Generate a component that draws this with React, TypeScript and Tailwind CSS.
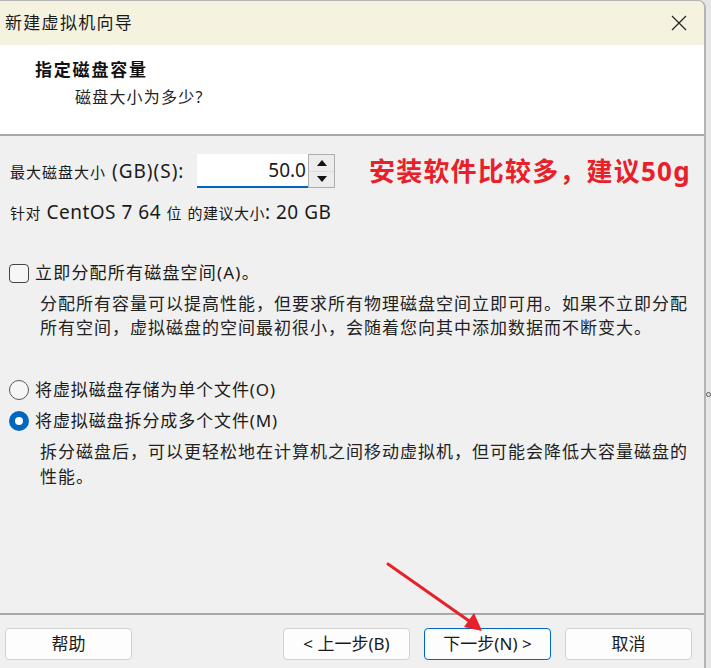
import React from 'react';

const FONT = "font-['Noto_Sans','Noto_Sans_CJK_SC',sans-serif]";

const WizardButton = ({ label, primary }: { label: string; primary?: boolean }) => (
  <button
    className={`w-[127px] h-[32px] rounded-[4px] bg-[#fdfdfd] text-[17px] text-[#1a1a1a] border ${
      primary ? 'border-[#0067c0]' : 'border-[#d0d0d0]'
    }`}
  >
    {label}
  </button>
);

const Radio = ({ checked }: { checked?: boolean }) =>
  checked ? (
    <span className="w-[20px] h-[20px] rounded-full bg-[#0067c0] flex items-center justify-center shrink-0">
      <span className="w-[8px] h-[8px] rounded-full bg-white" />
    </span>
  ) : (
    <span className="w-[20px] h-[20px] rounded-full border border-[#5a5a5a] bg-[#f6f6f6] shrink-0" />
  );

// CJK part of the mixed labels renders smaller than the latin part
const Cjk = ({ children }: { children: React.ReactNode }) => <span className="text-[15px]">{children}</span>;

const App = () => {
  return (
    <div className={`w-[711px] h-[668px] bg-[#e6e6e6] flex relative ${FONT}`}>
      <div className="w-[706px] h-full flex flex-col border-r-2 border-t border-[#b4b4b4] rounded-tr-[8px] overflow-hidden">
        {/* title bar */}
        <div className="h-[44px] bg-[#f5f2e0] flex items-center justify-between pl-[5px] pr-[16px] shrink-0">
          <span className="text-[17px] tracking-[1.3px] text-[#1a1a1a]">新建虚拟机向导</span>
          <svg width="16" height="16" viewBox="0 0 16 16" className="mr-[1px]">
            <path d="M1 1 L15 15 M15 1 L1 15" stroke="#222" strokeWidth="1.2" fill="none" />
          </svg>
        </div>

        {/* header */}
        <div className="h-[91px] bg-white border-b-2 border-[#a8a8a8] pl-[35px] pt-[12px] shrink-0">
          <div className="text-[17px] font-bold tracking-[1.8px] leading-[26px] text-[#111]">指定磁盘容量</div>
          <div className="pl-[40px] text-[16px] tracking-[1.2px] leading-[26px] mt-[1px] text-[#222]">磁盘大小为多少?</div>
        </div>

        {/* body */}
        <div className="flex-1 bg-[#f0f0f0] text-[#1a1a1a] flex flex-col">
          <div className="flex items-center h-[34px] mt-[18px] pl-[10px]">
            <span className="text-[19px] tracking-[1px] w-[187px] whitespace-nowrap">
              <Cjk>最大磁盘大小</Cjk> (GB)(S):
            </span>
            <div className="w-[111px] h-[34px] bg-white border-b-2 border-[#0067c0] flex items-center justify-end pr-[2px] text-[19px]">
              50.0
            </div>
            <div className="flex flex-col w-[27px] h-[34px] border border-[#adadad] bg-[#dcdcdc] gap-[1px]">
              <div className="flex-1 bg-[#ececec] flex items-center justify-center">
                <svg width="10" height="6" viewBox="0 0 10 6"><path d="M0 6 L5 0 L10 6 Z" fill="#111" /></svg>
              </div>
              <div className="flex-1 bg-[#ececec] flex items-center justify-center">
                <svg width="10" height="6" viewBox="0 0 10 6"><path d="M0 0 L5 6 L10 0 Z" fill="#111" /></svg>
              </div>
            </div>
            <span className="ml-[34px] text-[26px] font-bold text-[#e8202a] whitespace-nowrap tracking-[1.2px]">
              安装软件比较多，建议50g
            </span>
          </div>

          <div className="mt-[14px] pl-[10px] text-[19px] tracking-[0.5px] leading-[20px] whitespace-nowrap">
            <Cjk>针对</Cjk> CentOS 7 64 <Cjk>位</Cjk> <Cjk>的建议大小</Cjk>: 20 GB
          </div>

          <div className="mt-[40px] pl-[9px] flex items-center gap-[6px] h-[20px]">
            <span className="w-[20px] h-[19px] rounded-[4px] border border-[#444] bg-[#f6f6f6] shrink-0" />
            <span className="text-[17px] tracking-[1.2px] whitespace-nowrap">立即分配所有磁盘空间(A)。</span>
          </div>
          <p className="mt-[9px] pl-[40px] text-[17px] tracking-[1px] leading-[24px] whitespace-nowrap text-[#222]">
            分配所有容量可以提高性能，但要求所有物理磁盘空间立即可用。如果不立即分配
            <br />
            所有空间，虚拟磁盘的空间最初很小，会随着您向其中添加数据而不断变大。
          </p>

          <div className="mt-[40px] pl-[9px] flex items-center gap-[6px] h-[20px]">
            <Radio />
            <span className="text-[17px] tracking-[0.9px] whitespace-nowrap">将虚拟磁盘存储为单个文件(O)</span>
          </div>
          <div className="mt-[11px] pl-[9px] flex items-center gap-[6px] h-[20px]">
            <Radio checked />
            <span className="text-[17px] tracking-[0.9px] whitespace-nowrap">将虚拟磁盘拆分成多个文件(M)</span>
          </div>
          <p className="mt-[8px] pl-[40px] text-[17px] tracking-[1px] leading-[25px] whitespace-nowrap text-[#222]">
            拆分磁盘后，可以更轻松地在计算机之间移动虚拟机，但可能会降低大容量磁盘的
            <br />
            性能。
          </p>
        </div>

        {/* footer */}
        <div className="h-[55px] bg-[#f0f0f0] border-t-2 border-[#a8a8a8] flex items-start pt-[13px] pl-[5px] pr-[12px] shrink-0">
          <WizardButton label="帮助" />
          <div className="ml-auto flex gap-[14px]">
            <WizardButton label="< 上一步(B)" />
            <WizardButton label="下一步(N) >" primary />
            <WizardButton label="取消" />
          </div>
        </div>
      </div>

      {/* small resize marker on the window edge */}
      <span className="absolute left-[706px] top-[392px] w-[5px] h-[5px] rounded-full border border-[#555]" />

      {/* annotation arrow */}
      <svg className="absolute left-0 top-0 pointer-events-none" width="711" height="668">
        <line x1="388" y1="564" x2="472" y2="623" stroke="#e8202a" strokeWidth="3" strokeLinecap="round" />
        <path d="M482 631 L464 627 L474 613 Z" fill="#e8202a" />
      </svg>
    </div>
  );
};

export default App;
